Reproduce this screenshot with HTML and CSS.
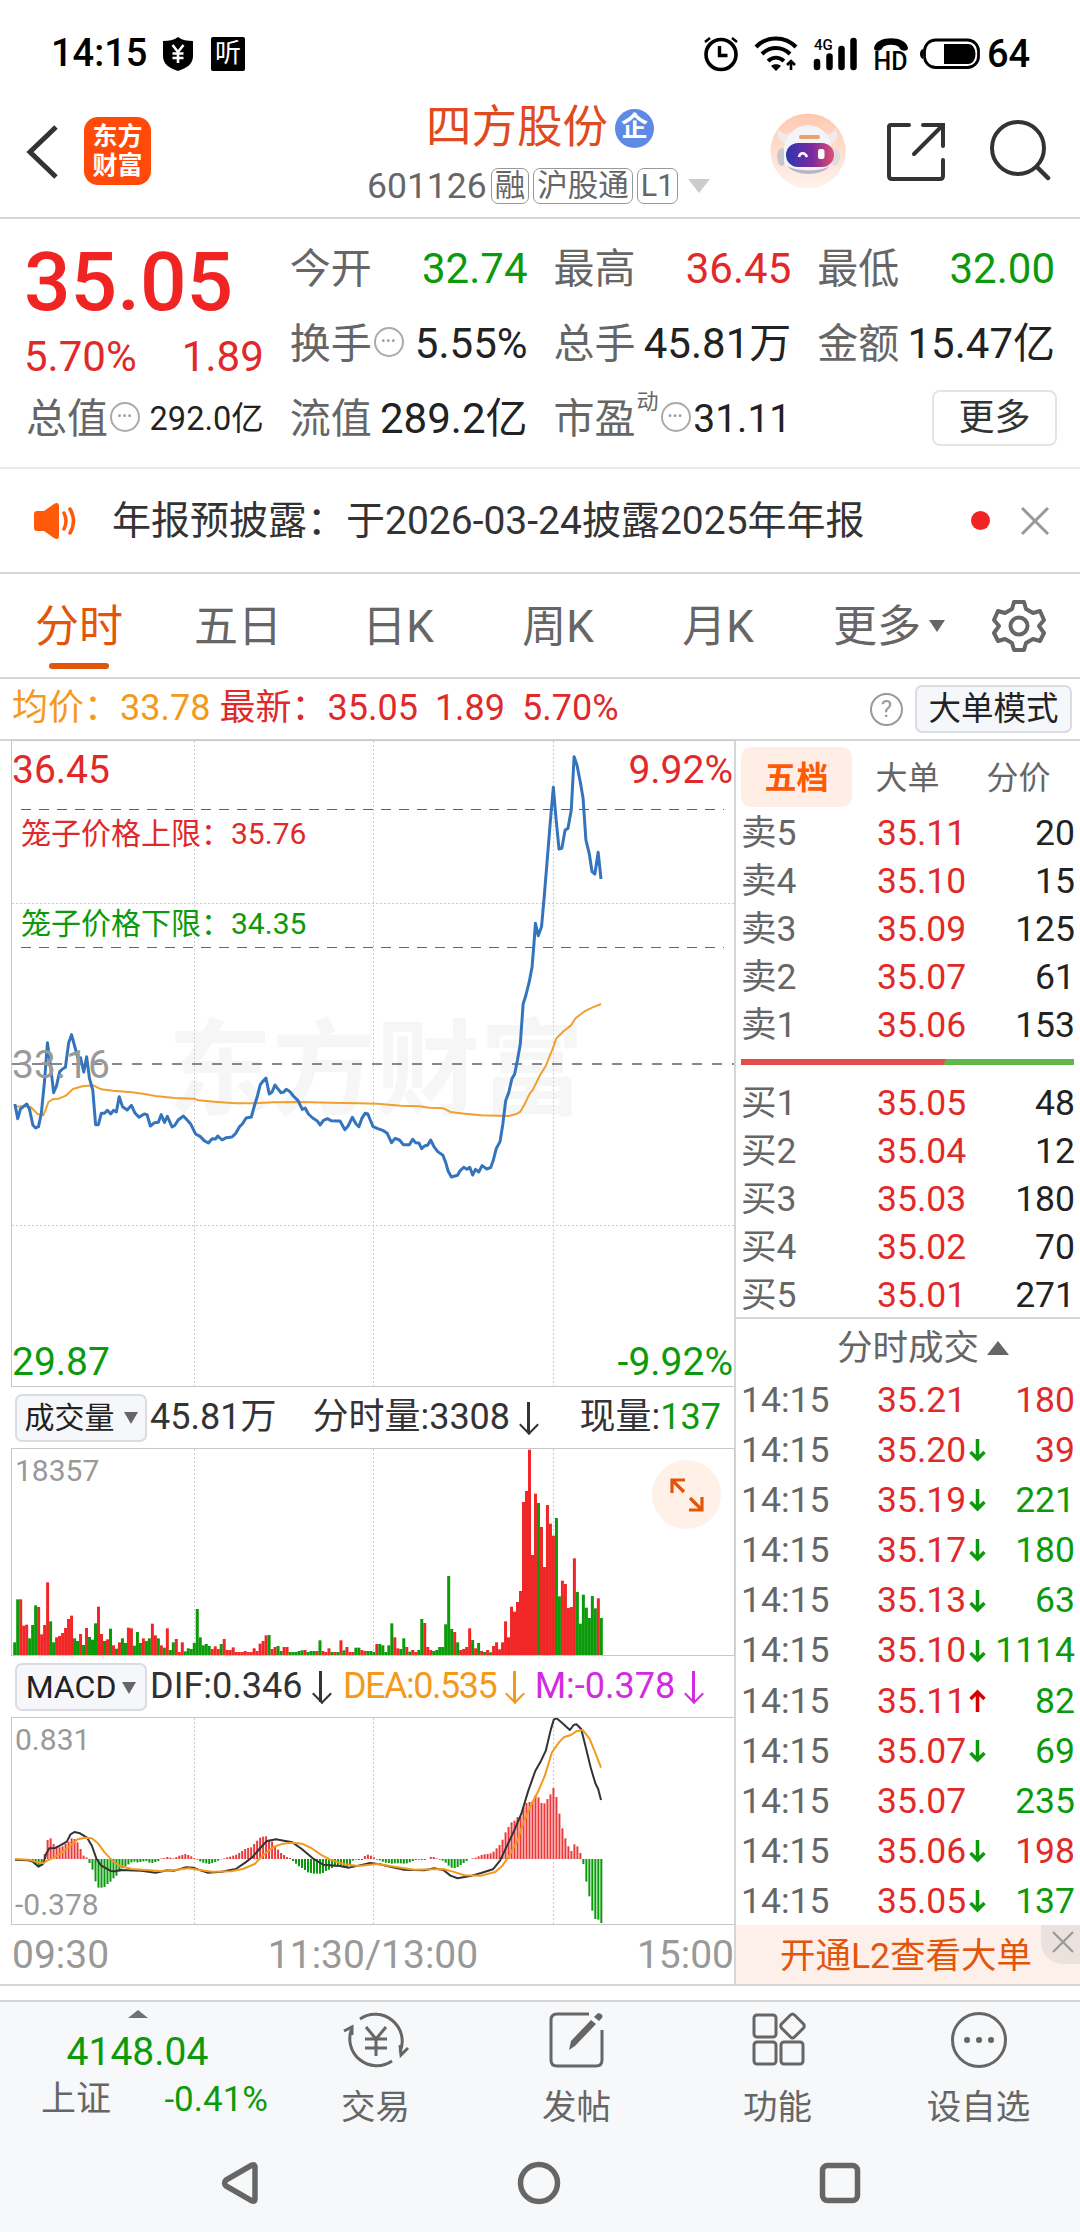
FILE: index.html
```html
<!DOCTYPE html>
<html lang="zh-CN">
<head>
  <meta charset="UTF-8" />
  <meta name="viewport" content="width=device-width, initial-scale=1.0" />
  <title>四方股份 601126</title>
  <link rel="stylesheet" href="styles.css">
</head>
<body>
  <!-- Status bar -->
  <div class="status">
    <span class="clock">14:15</span>
    <svg class="shield" width="30" height="34" viewBox="0 0 30 34"><path d="M15 0C19 3 24 4 30 4V19C30 27 24 31 15 34C6 31 0 27 0 19V4C6 4 11 3 15 0Z"/><path d="M9.500 8L15 15L20.500 8M15 15V26M9.500 16.500H20.500M9.500 21H20.500" fill="none" stroke="#fff" stroke-width="2.600"/></svg>
    <span class="listen">听</span>
    <span class="grow"></span>
    <svg class="phone-icons" width="340" height="60" viewBox="703 24 340 60">
      <g fill="none" stroke="#000">
        <circle cx="721" cy="54.500" r="15" stroke-width="3.600"/>
        <path d="M719.500 46V55.500H727.500" stroke-width="3.400"/>
        <path d="M705 42L710 38M737 42L732 38" stroke-width="2.600"/>
        <path d="M756 47C767 35.500 785 35.500 796 47M762 54C770 46 782 46 790 54M768 61C773 56.500 779 56.500 784 61" stroke-width="4"/>
        <path d="M791 70V62M787 65L791 61L795 65" stroke-width="2.600"/>
        <path d="M817 62V67M829.500 56.500V67M841.500 49V67M853.500 41V67" stroke-width="6.500" stroke-linecap="round"/>
        <rect x="924.500" y="40" width="54" height="27.500" rx="11" stroke-width="2.800"/>
      </g>
      <path d="M776 71L771 66C773 63.500 779 63.500 781 66Z"/>
      <path d="M874 48C876 35 906 35 908 48C908 52 900 51.500 899 47C895 44 887 44 883 47C882 51.500 874 52 874 48Z"/>
      <path d="M944 44H968C978 44 978 64 968 64H944ZM923 49C919 50 919 58 923 59Z"/>
      <text x="814" y="50" font-size="15" font-weight="500">4G</text>
      <text x="873.500" y="70" font-size="25" font-weight="500">HD</text>
      <text x="987" y="67" font-size="38" font-weight="500">64</text>
    </svg>
  </div>

  <!-- Header -->
  <header class="header">
    <svg class="back" width="34" height="56" viewBox="0 0 34 56"><path d="M30 3L4 28L30 53" fill="none" stroke="#333" stroke-width="5"/></svg>
    <div class="logo">东方<br>财富</div>
    <div class="stock">
      <div class="name">四方股份<span class="corp">企</span></div>
      <div class="code">601126<span class="tag">融</span><span class="tag">沪股通</span><span class="tag">L1</span><i class="tri"></i></div>
    </div>
    <svg class="robot" width="76" height="76" viewBox="0 0 76 76">
      <defs>
        <linearGradient id="halo" x2="0" y2="1"><stop stop-color="#ffc9b0"/><stop offset="1" stop-color="#fff3ec"/></linearGradient>
        <linearGradient id="visor"><stop stop-color="#2d36b0"/><stop offset=".55" stop-color="#7c2aa0"/><stop offset="1" stop-color="#e0506a"/></linearGradient>
      </defs>
      <circle cx="38" cy="38" r="37.500" fill="url(#halo)"/>
      <path d="M8 15C6 23 9 29 17 31L24 20C15 22 10 20 8 15ZM65 15C69 24 67 29 59 31L53 20C61 22 64 20 65 15Z" fill="#f1eaea"/>
      <ellipse cx="12" cy="44" rx="5" ry="9" fill="#c9c6d0"/><ellipse cx="65" cy="44" rx="5" ry="9" fill="#dedbe2"/>
      <path d="M14 38C14 4 62 4 62 38V46C64 67 12 67 14 46Z" fill="#f4f3f6"/>
      <path d="M16 52C25 64 52 64 61 52C54 59 24 59 16 52Z" fill="#bbb7c2"/>
      <rect x="29" y="22" width="21" height="4" rx="2" fill="#e5a26d"/>
      <rect x="16" y="30" width="48" height="24" rx="12" fill="url(#visor)"/>
      <path d="M29 44C30 39 35 39 37 44" fill="none" stroke="#fff" stroke-width="2.500"/>
      <rect x="48" y="36" width="6.500" height="10" rx="2.500" fill="#fff"/>
    </svg>
    <svg class="share" width="60" height="60" viewBox="0 0 60 60"><path d="M23 3H5Q3 3 3 5V54Q3 57 6 57H54Q57 57 57 54V38M37 3H57V24M56 4L28 32" fill="none" stroke="#333" stroke-width="4" stroke-linecap="round"/></svg>
    <svg class="search" width="62" height="62" viewBox="0 0 62 62"><circle cx="29" cy="29" r="26" fill="none" stroke="#333" stroke-width="4"/><path d="M48 48L59 59" stroke="#333" stroke-width="4.500" stroke-linecap="round"/></svg>
  </header>

  <!-- Quote -->
  <section class="quote">
    <div class="col">
      <div class="price">35.05</div>
      <div class="change"><span>5.70%</span><span>1.89</span></div>
      <div class="item small"><label>总值</label><i class="dots">•••</i><b>292.0亿</b></div>
    </div>
    <div class="col">
      <div class="item"><label>今开</label><b class="down">32.74</b></div>
      <div class="item"><label>换手</label><i class="dots">•••</i><b>5.55%</b></div>
      <div class="item"><label>流值</label><b>289.2亿</b></div>
    </div>
    <div class="col">
      <div class="item"><label>最高</label><b class="up">36.45</b></div>
      <div class="item"><label>总手</label><b>45.81万</b></div>
      <div class="item pe"><label>市盈</label><sup>动</sup><i class="dots">•••</i><b>31.11</b></div>
    </div>
    <div class="col">
      <div class="item"><label>最低</label><b class="down">32.00</b></div>
      <div class="item"><label>金额</label><b>15.47亿</b></div>
      <div class="item"><button class="more">更多</button></div>
    </div>
  </section>

  <!-- Notice -->
  <div class="notice">
    <svg width="46" height="38" viewBox="0 0 46 38"><path d="M3 9H10L20 2Q25 -1 25 5V33Q25 39 20 36L10 29H3Q0 29 0 26V12Q0 9 3 9Z" fill="#ff5a0a"/><path d="M30 11Q34 19 30 27M36 7Q43 19 36 31" fill="none" stroke="#ff5a0a" stroke-width="3.500" stroke-linecap="round"/></svg>
    <p>年报预披露：于2026-03-24披露2025年年报</p>
    <i class="red-dot"></i>
    <svg width="30" height="30" viewBox="0 0 30 30"><path d="M2 2L28 28M28 2L2 28" stroke="#999" stroke-width="3"/></svg>
  </div>

  <!-- Period tabs -->
  <nav class="tabs">
    <span class="active">分时</span><span>五日</span><span>日K</span><span>周K</span><span>月K</span>
    <span class="tab-more">更多<i class="tri"></i></span>
    <svg width="54" height="54" viewBox="0 0 54 54" fill="none" stroke="#666" stroke-width="4"><path d="M22 3H32L34 10L41 14L48 12L52 21L47 27L52 34L48 42L41 40L34 44L32 51H22L20 44L13 40L6 42L2 34L7 27L2 21L6 12L13 14L20 10Z" stroke-linejoin="round"/><circle cx="27" cy="27" r="8.500"/></svg>
  </nav>

  <div class="info">
    <span class="avg">均价：33.78</span>
    <span class="last">最新：35.05</span><span class="last">1.89</span><span class="last">5.70%</span>
    <i class="help">?</i>
    <button>大单模式</button>
  </div>

  <main class="main">
    <div class="charts">
      <svg class="chart" width="722" height="645" viewBox="0 0 722 645">
        <text class="watermark" x="156" y="366">东方财富</text>
        <path class="grid" d="M182.500 0V645M361.500 0V645M541.500 0V645M0 162.500H722M0 484.500H722"/>
        <path class="limit" d="M9 68.500H712" stroke="#b04046"/>
        <path class="limit" d="M9 206.500H712" stroke="#2e8b2e"/>
        <path class="base" d="M0 323H722"/>
        <g transform="translate(-12.200 239) scale(.4719 .3333)" fill="none">
          <polyline class="avg-line" points="32,380 55,378 66,382 80,402 92,406 97,390 103,366 112,358 125,356 140,347 155,327 175,319 198,316 215,328 240,332 280,337 310,343 330,348 370,354 412,356 420,361 460,366 500,370 540,370 580,367 640,366 700,368 760,370 800,371 850,377 890,379 910,383 940,385 955,396 985,401 1020,406 1078,408 1095,402 1103,395 1112,373 1122,343 1130,328 1145,285 1157,258 1172,205 1179,176 1195,153 1210,137 1220,115 1238,95 1255,83 1274,72"/>
          <polyline class="price-line" points="32,372 38,416 44,386 50,380 57,372 63,388 70,435 76,444 82,440 88,400 95,300 101,188 108,262 114,338 120,318 127,275 133,267 139,262 146,188 152,164 158,195 165,232 171,233 178,276 184,230 190,295 197,330 203,434 209,434 215,400 222,400 228,391 235,402 241,391 247,396 253,350 260,380 270,390 279,376 286,398 295,412 306,402 312,404 319,438 328,428 336,427 342,404 349,427 355,409 365,441 371,436 378,420 389,408 397,420 404,431 415,462 425,470 433,482 442,489 450,476 457,477 462,468 471,480 480,473 492,471 500,460 508,440 514,432 522,414 533,411 540,375 546,348 552,314 558,303 564,294 571,342 577,336 583,315 590,328 596,338 602,336 607,328 615,335 622,348 632,362 641,388 647,384 654,402 663,414 672,422 679,435 686,421 694,416 702,422 712,423 721,423 731,449 738,438 747,412 755,432 761,440 767,416 774,400 780,402 785,420 791,440 801,446 813,452 821,460 830,488 838,475 847,480 855,494 868,494 875,478 881,488 888,489 894,506 900,498 907,495 913,480 920,500 928,515 939,526 945,548 950,573 957,591 970,586 975,573 983,562 990,568 996,562 1002,585 1008,568 1015,576 1022,557 1032,567 1040,563 1046,540 1052,506 1060,485 1066,432 1072,362 1079,335 1085,297 1091,282 1097,240 1103,192 1109,72 1115,45 1122,5 1128,-40 1132,-110 1135,-170 1141,-133 1148,-160 1154,-255 1160,-360 1166,-465 1173,-578 1179,-480 1185,-393 1191,-395 1198,-450 1204,-455 1211,-510 1217,-670 1223,-645 1230,-595 1236,-545 1242,-420 1249,-380 1255,-325 1261,-318 1268,-383 1274,-303"/>
        </g>
        <g font-size="39">
          <text class="up" x="0" y="42">36.45</text>
          <text class="up" x="721" y="42" text-anchor="end">9.92%</text>
          <text class="muted" x="0" y="337">33.16</text>
          <text class="down" x="0" y="634">29.87</text>
          <text class="down" x="721" y="634" text-anchor="end">-9.92%</text>
        </g>
        <g font-size="30">
          <text class="up" x="9" y="103">笼子价格上限：35.76</text>
          <text class="down" x="9" y="193">笼子价格下限：34.35</text>
        </g>
      </svg>

      <div class="legend">
        <button>成交量<i class="tri"></i></button>
        <span class="vol-total">45.81万</span><span>分时量:3308</span><i class="arrow"></i>
        <span class="vol-now">现量:<em class="down">137</em></span>
      </div>
      <div class="volume">
        <svg class="chart" id="volume" width="722" height="206" viewBox="0 0 722 206">
          <path class="grid" d="M182.500 0V206M361.500 0V206M541.500 0V206"/>
          <text class="muted" x="3" y="32" font-size="30">18357</text>
        </svg>
        <div class="expand"><svg width="34" height="34" viewBox="0 0 34 34"><path d="M2 15V2H15M2 2L14 14M32 19V32H19M32 32L20 20" fill="none" stroke="#e2560c" stroke-width="3.200"/></svg></div>
      </div>

      <div class="legend">
        <button class="macd-btn">MACD<i class="tri"></i></button>
        <span>DIF:0.346</span><i class="arrow"></i>
        <span class="dea">DEA:0.535</span><i class="arrow dea"></i>
        <span class="m">M:-0.378</span><i class="arrow m"></i>
      </div>
      <svg class="chart" id="macd" width="722" height="206" viewBox="0 0 722 206">
        <path class="grid" d="M182.500 0V206M361.500 0V206M541.500 0V206"/>
        <g class="bars"></g>
        <g transform="translate(-12.200 -69) scale(.4719 .3333)" fill="none">
          <polyline class="dif-line" points="32,632 60,634 70,638 82,653 92,645 98,615 105,598 118,597 130,588 142,578 150,556 158,549 170,553 185,566 195,590 205,630 215,650 235,666 245,667 255,663 300,665 330,671 355,664 370,665 395,655 410,656 425,664 440,671 470,668 500,660 520,641 535,625 550,600 565,577 585,571 605,576 620,580 640,600 665,630 685,647 720,651 740,656 760,650 785,642 805,646 830,654 855,662 900,664 920,658 940,663 955,680 970,688 1000,680 1020,672 1045,661 1060,635 1075,590 1090,545 1105,495 1120,425 1135,365 1147,335 1157,305 1167,245 1174,212 1180,208 1190,220 1208,243 1216,228 1222,226 1232,240 1240,285 1252,355 1262,403 1268,420 1274,453"/>
          <polyline class="dea-line" points="32,630 60,632 75,638 92,643 100,635 115,626 135,607 150,590 165,571 182,566 195,568 208,583 222,610 240,637 255,651 280,660 340,666 370,663 400,658 420,662 450,668 490,667 515,660 540,645 560,616 580,594 600,584 620,581 640,584 660,597 680,617 700,632 730,646 760,651 800,645 850,656 880,662 940,660 960,668 985,679 1020,680 1050,669 1065,650 1080,620 1095,580 1110,520 1125,470 1140,430 1155,380 1170,310 1185,280 1195,265 1210,258 1222,247 1235,243 1250,270 1262,312 1274,356"/>
        </g>
        <g class="muted" font-size="30">
          <text x="3" y="32">0.831</text>
          <text x="3" y="197">-0.378</text>
        </g>
      </svg>
      <div class="axis"><span>09:30</span><span>11:30/13:00</span><span>15:00</span></div>
    </div>

    <!-- Order book -->
    <aside class="book">
      <div class="book-tabs"><span class="active">五档</span><span>大单</span><span>分价</span></div>
      <div class="depth">
        <div><label>卖5</label><b>35.11</b><em>20</em></div>
        <div><label>卖4</label><b>35.10</b><em>15</em></div>
        <div><label>卖3</label><b>35.09</b><em>125</em></div>
        <div><label>卖2</label><b>35.07</b><em>61</em></div>
        <div><label>卖1</label><b>35.06</b><em>153</em></div>
      </div>
      <div class="ratio"></div>
      <div class="depth">
        <div><label>买1</label><b>35.05</b><em>48</em></div>
        <div><label>买2</label><b>35.04</b><em>12</em></div>
        <div><label>买3</label><b>35.03</b><em>180</em></div>
        <div><label>买4</label><b>35.02</b><em>70</em></div>
        <div><label>买5</label><b>35.01</b><em>271</em></div>
      </div>
      <div class="deals-title">分时成交<i></i></div>
      <div class="deals" id="deals"></div>
      <div class="ad">开通L2查看大单<span class="close"><svg width="22" height="22" viewBox="0 0 22 22"><path d="M1 1L21 21M21 1L1 21" stroke="#999" stroke-width="2.200"/></svg></span></div>
    </aside>
  </main>

  <!-- Bottom bar -->
  <footer class="bottom">
    <div class="index">
      <i class="tri"></i>
      <div class="points">4148.04</div>
      <div class="pct"><label>上证</label><span>-0.41%</span></div>
    </div>
    <div class="nav-item">
      <svg width="66" height="60" viewBox="0 0 66 60" fill="none" stroke="#666" stroke-width="3"><path d="M17 9A27 27 0 0 1 57 42M49 51A27 27 0 0 1 9 18"/><path d="M1 21L9 17V25M65 38L58 45L57 35" /><path d="M23 17L33 29L43 17M33 29V46M22 29H44M22 38H44"/></svg>
      <span>交易</span>
    </div>
    <div class="nav-item">
      <svg width="66" height="60" viewBox="0 0 66 60" fill="none" stroke="#666" stroke-width="3"><path d="M45 4H13Q7 4 7 10V50Q7 56 13 56H52Q58 56 58 50V20"/><path d="M25 40L27 31L47 10L52 14L31 36ZM50 7L54 3Q60 4 58 8L55 11Z" fill="#666" stroke="none"/></svg>
      <span>发帖</span>
    </div>
    <div class="nav-item">
      <svg width="66" height="60" viewBox="0 0 66 60" fill="none" stroke="#666" stroke-width="3"><rect x="9" y="5" width="22" height="22" rx="3"/><rect x="9" y="32" width="22" height="22" rx="3"/><rect x="36" y="32" width="22" height="22" rx="3"/><path d="M45.500 5L36.500 14Q35 16 36.500 18L45.500 27Q47.500 29 49.500 27L58.500 18Q60 16 58.500 14L49.500 5Q47.500 3 45.500 5Z"/></svg>
      <span>功能</span>
    </div>
    <div class="nav-item">
      <svg width="66" height="60" viewBox="0 0 66 60" fill="none" stroke="#666" stroke-width="3"><circle cx="33" cy="30" r="26.500"/><path d="M21 30H21.100M33 30H33.100M45 30H45.100" stroke-width="6" stroke-linecap="round"/></svg>
      <span>设自选</span>
    </div>
  </footer>
  <div class="system">
    <svg width="42" height="46" viewBox="0 0 42 46"><path d="M33 5L7 20Q4 23 7 26L33 41Q36 42 36 39V7Q36 4 33 5Z"/></svg>
    <svg width="46" height="46" viewBox="0 0 46 46"><circle cx="23" cy="23" r="18.500"/></svg>
    <svg width="46" height="46" viewBox="0 0 46 46"><rect x="5.500" y="5.500" width="35" height="35" rx="5"/></svg>
  </div>
  <script src="charts.js"></script>
</body>
</html>
```
FILE: styles.css
```css
* {
  box-sizing: border-box;
}
body {
  margin: 0;
  width: 1080px;
  background-color: #fff;
  color: #333;
  font-family: Roboto, "Noto Sans CJK SC", sans-serif;
  line-height: 1.2;
}
svg {
  display: block;
  flex: none;
}
i, em, b {
  font-style: normal;
  font-weight: 400;
}
button {
  font-family: inherit;
  color: inherit;
  padding: 0;
}
.up { color: #e02a2a; fill: #e02a2a; }
.down { color: #0c9a0c; fill: #0c9a0c; }
.muted { fill: #999; }
.grow { flex: 1; }
.tri {
  display: inline-block;
  border: 8px solid transparent;
  border-top: 12px solid #666;
  border-bottom: 0;
}

/* status bar */
.status {
  height: 106px;
  padding: 2px 37px 0 51px;
  display: flex;
  align-items: center;
  color: #000;
}
.clock {
  width: 112px;
  font-size: 38px;
  font-weight: 500;
}
.listen {
  width: 34px;
  height: 34px;
  margin-left: 18px;
  background: #000;
  color: #fff;
  border-radius: 2px;
  font-size: 26px;
  line-height: 32px;
  text-align: center;
}

/* header */
.header {
  height: 113px;
  display: flex;
  align-items: flex-start;
  border-bottom: 2px solid #d5d5d5;
}
.back {
  margin: 18px 0 0 26px;
}
.logo {
  width: 67px;
  height: 68px;
  margin: 11px 0 0 24px;
  padding-top: 5px;
  border-radius: 14px;
  background: #ff4a0a;
  color: #fff;
  font-size: 25px;
  font-weight: 700;
  line-height: 29px;
  text-align: center;
}
.stock {
  width: 360px;
  margin: 1px 0 0 208px;
}
.name {
  display: flex;
  align-items: center;
  height: 42px;
  padding-left: 67px;
  color: #e04a20;
  font-size: 45.500px;
  line-height: 44px;
}
.corp {
  width: 39px;
  height: 39px;
  margin-left: 7px;
  border-radius: 50%;
  background: #5e8ae6;
  color: #fff;
  font-size: 27px;
  font-weight: 700;
  line-height: 37px;
  text-align: center;
}
.code {
  display: flex;
  align-items: center;
  height: 36px;
  margin-top: 19px;
  padding-left: 8px;
  color: #666;
  font-size: 35.500px;
}
.tag {
  height: 36px;
  margin-left: 4px;
  padding: 0 3px;
  border: 1.500px solid #999;
  border-radius: 7px;
  font-size: 30.500px;
  line-height: 33px;
}
.code .tri {
  margin-left: 10px;
  border-width: 14px 11px 0;
  border-top-color: #ccc;
}
.robot {
  margin: 7px 0 0 51px;
}
.share {
  margin: 16px 0 0 40px;
}
.search {
  margin: 13px 0 0 43px;
}

/* quote */
.quote {
  display: grid;
  grid-template-columns: repeat(4, 1fr);
  gap: 26px;
  height: 250px;
  padding: 13px 25px 0 26px;
  border-bottom: 2px solid #ececec;
}
.item {
  display: flex;
  align-items: center;
  height: 75px;
  font-size: 41px;
  white-space: nowrap;
}
.item label {
  color: #666;
}
.item b {
  margin-left: auto;
  font-size: 42px;
}
.item b:not(.up):not(.down) {
  color: #222;
}
.price {
  height: 94px;
  margin-left: -2px;
  color: #f12424;
  font-size: 82px;
  font-weight: 500;
  line-height: 101px;
}
.change {
  display: flex;
  justify-content: space-between;
  height: 56px;
  margin-left: -2px;
  color: #e02a2a;
  font-size: 42px;
  line-height: 62px;
}
.small b {
  font-size: 32.500px;
}
.dots {
  width: 30px;
  height: 30px;
  margin: -6px 0 0 2px;
  border: 2.500px solid #aaa;
  border-radius: 50%;
  color: #999;
  font-size: 12px;
  line-height: 25px;
  letter-spacing: 1px;
  text-align: center;
}
.item sup {
  margin: -36px 0 0 1px;
  color: #666;
  font-size: 22px;
  line-height: 24px;
  vertical-align: baseline;
}
.pe b {
  font-size: 39px;
}
.more {
  width: 125px;
  height: 56px;
  margin: -4px -2px 0 auto;
  border: 2px solid #e4e4e4;
  border-radius: 8px;
  background: #fff;
  font-size: 36px;
  line-height: 50px;
}

/* notice */
.notice {
  display: flex;
  align-items: center;
  height: 105px;
  padding: 0 30px 0 34px;
  border-bottom: 2px solid #d5d5d5;
}
.notice p {
  flex: 1;
  margin: 0 0 0 32px;
  font-size: 39px;
  line-height: 50px;
}
.red-dot {
  width: 19px;
  height: 19px;
  margin-right: 30px;
  border-radius: 50%;
  background: #f12424;
}

/* tabs */
.tabs {
  display: flex;
  align-items: center;
  height: 105px;
  border-bottom: 2px solid #d5d5d5;
  color: #666;
  font-size: 44px;
  line-height: 60px;
}
.tabs span {
  position: relative;
  width: 160px;
  padding-top: 3px;
  text-align: center;
}
.tabs .active {
  width: 158px;
  color: #e2560c;
}
.tabs .active::after {
  content: "";
  position: absolute;
  left: 49px;
  bottom: -12px;
  width: 60px;
  height: 6px;
  border-radius: 3px;
  background: #e2560c;
}
.tabs .tab-more {
  width: 189px;
  margin-right: 5px;
  text-align: right;
  white-space: nowrap;
}
.tab-more .tri {
  margin: 0 42px 10px 8px;
}

/* info line */
.info {
  display: flex;
  align-items: center;
  height: 62px;
  padding: 0 8px 0 12px;
  border-bottom: 2px solid #d5d5d5;
  font-size: 36px;
}
.avg { color: #f39a1d; margin-right: 9px; }
.last { color: #e02a2a; margin-right: 17px; }
.help {
  width: 33px;
  height: 33px;
  margin: 0 12px 0 auto;
  border: 2.500px solid #999;
  border-radius: 50%;
  color: #999;
  font-size: 24px;
  line-height: 29px;
  text-align: center;
}
.info button, .legend button {
  height: 48px;
  border: 2px solid #dadce2;
  border-radius: 7px;
  background: #f6f7fa;
  color: #222;
}
.info button {
  width: 157px;
  font-size: 32.500px;
  line-height: 42px;
}

/* charts */
.main {
  display: flex;
  height: 1245px;
  border-bottom: 2px solid #d5d5d5;
}
.charts {
  width: 734px;
  padding-left: 12px;
}
.chart {
  outline: 1.500px solid #c8c8c8;
}
.grid {
  fill: none;
  stroke: #ccc;
  stroke-width: 1;
  stroke-dasharray: 2 2;
}
.limit {
  stroke-width: 1;
  stroke-dasharray: 10 8;
}
.base {
  stroke: #888;
  stroke-width: 2;
  stroke-dasharray: 10 10;
}
.watermark {
  fill: #f6f6f6;
  font-size: 104px;
  font-weight: 700;
}
polyline {
  vector-effect: non-scaling-stroke;
  stroke-linejoin: round;
}
.price-line { stroke: #3474bd; stroke-width: 3; }
.avg-line { stroke: #f0a030; stroke-width: 2; }
.dif-line { stroke: #333; stroke-width: 2; }
.dea-line { stroke: #f39a1d; stroke-width: 2; }
.legend {
  display: flex;
  align-items: center;
  height: 63px;
  font-size: 36px;
  white-space: nowrap;
}
.legend button {
  width: 132px;
  margin: 0 3px 0 3px;
  font-size: 30px;
  line-height: 42px;
}
.legend .macd-btn {
  font-size: 32px;
}
.legend button .tri {
  margin: 0 0 4px 9px;
  border-width: 12px 7px 0;
}
.legend .macd-btn .tri {
  margin-left: 6px;
}
.vol-total { margin-right: 36px; }
.vol-now { margin-left: 50px; }
.arrow {
  position: relative;
  width: 2.500px;
  height: 31px;
  margin: 0 0 0 17px;
  background: currentColor;
}
.arrow::after {
  content: "";
  position: absolute;
  left: -4.800px;
  bottom: 1px;
  width: 12px;
  height: 12px;
  border: solid currentColor;
  border-width: 0 2.500px 2.500px 0;
  transform: rotate(45deg);
}
.dea { color: #f39a1d; }
span.dea {
  margin-left: 21px;
  letter-spacing: -1.500px;
}
.m { color: #d22be0; }
span.m { margin-left: 19px; }
.volume {
  position: relative;
}
.expand {
  position: absolute;
  right: 13px;
  top: 11px;
  width: 69px;
  height: 69px;
  display: flex;
  align-items: center;
  justify-content: center;
  border-radius: 50%;
  background: #fff0e8;
}
.axis {
  display: flex;
  justify-content: space-between;
  height: 60px;
  color: #999;
  font-size: 39px;
  line-height: 63px;
}

/* order book */
.book {
  width: 346px;
  border-left: 2px solid #d5d5d5;
  font-size: 35.500px;
}
.book-tabs {
  display: flex;
  height: 66px;
  padding: 6px 0 0 5px;
  color: #666;
  font-size: 32px;
  line-height: 63px;
  text-align: center;
}
.book-tabs span { width: 111px; }
.book-tabs .active {
  height: 60px;
  border-radius: 10px;
  background: #feeee6;
  color: #fd5a06;
  font-weight: 700;
}
.depth div, .deals div {
  display: grid;
  grid-template-columns: 136px 92px 22px 1fr;
  align-items: center;
  height: 48px;
  padding: 0 5px;
}
.depth em, .deals em {
  grid-column: 4;
  justify-self: end;
}
.depth label, .deals label { color: #666; }
.depth b, .deals b { color: #e02a2a; }
.depth em { color: #222; }
.depth { height: 252px; padding-top: 2px; }
.ratio {
  height: 6px;
  margin: 0 6px 0 5px;
  background: linear-gradient(115deg, #e04e4e 61%, #62b74c 61.200%);
}
.ratio + .depth { padding-top: 14px; }
.deals-title {
  height: 58px;
  border-top: 2px solid #d5d5d5;
  color: #666;
  line-height: 59px;
  padding-left: 101px;
}
.deals-title i {
  display: inline-block;
  margin: 0 0 5px 8px;
  border: solid transparent;
  border-width: 0 11px 14px;
  border-bottom-color: #666;
}
.deals {
  height: 550px;
}
.deals div { height: 50.150px; }
.ad {
  position: relative;
  height: 59px;
  background: #fdf0ea;
  color: #e2560c;
  line-height: 62px;
  padding-left: 44px;
}
.close {
  position: absolute;
  right: 0;
  top: 0;
  width: 39px;
  height: 39px;
  padding: 6px 0 0 11px;
  border-bottom-left-radius: 22px;
  background: #ebe1dd;
}

/* bottom */
.bottom {
  display: flex;
  height: 136px;
  margin-top: 14px;
  border-top: 2px solid #d5d5d5;
  background: #f7f8fa;
  color: #666;
}
.index {
  width: 275px;
  text-align: center;
}
.index .tri {
  display: block;
  width: 0;
  margin: 8px auto 0;
  border: solid transparent;
  border-width: 0 10px 8px;
  border-bottom-color: #707078;
}
.points {
  margin-top: 13px;
  color: #0c9a0c;
  font-size: 39px;
  line-height: 42px;
}
.pct {
  display: flex;
  justify-content: space-between;
  margin-top: 5px;
  padding: 0 7px 0 41px;
  font-size: 35px;
  line-height: 44px;
}
.pct span { color: #0c9a0c; }
.nav-item {
  width: 201px;
  display: flex;
  flex-direction: column;
  align-items: center;
  padding-top: 8px;
  font-size: 34.500px;
  line-height: 44px;
}
.nav-item span { margin-top: 15px; }
.system {
  display: flex;
  height: 96px;
  padding: 24px 217px 0 219px;
  justify-content: space-between;
  background: #f7f8fa;
}
.system svg {
  fill: none;
  stroke: #666;
  stroke-width: 5.500;
}
```
FILE: charts.js
```js
const SVG = "http://www.w3.org/2000/svg";
const STEP = 2.993;

// one value per minute, negative = falling minute
const volume = [
  -38, -167, 167, 88, 91, -50, -90, -149, 144, 62, 90, 218, -101, -38, 53, 57, 66, 81, 108, 118,
  -50, -42, 63, -30, 81, -54, -46, -95, 145, 63, -42, 47, -79, 29, -19, 38, -50, -36, 82, 80,
  -28, -69, -36, 50, -42, -50, 94, 59, -50, 29, -22, 80, -15, -38, 48, 9, 38, -11, -20, -18,
  -36, -138, -53, -29, -33, -27, 18, 26, 18, -33, 48, 15, 15, 23, 9, 9, 9, 12, 9, 9,
  20, 12, 34, 42, 59, -60, 18, 24, -27, -12, 24, 24, -9, -9, -9, -12, -14, 15, -9, -12,
  -12, 12, -44, 12, 9, 20, -9, 9, -9, 44, -14, 24, 9, 9, -22, -22, 15, 12, -12, -12,
  -9, 33, -33, -29, -9, -29, -95, 53, 20, -18, -50, 24, -10, 15, 9, -15, -108, 96, 24, 15,
  -12, -15, -24, -24, -92, -237, -78, 69, -38, 15, 18, 24, 80, -45, 20, -36, 12, -9, 15, -8,
  27, 38, 17, 38, 101, 53, 145, 130, 159, 192, 459, 492, 616, 300, 484, -456, 384, 264, 450, 394,
  358, -411, -176, 223, 213, 141, 144, 290, -189, -94, -181, -142, -111, -177, -140, 170, -111
];

const macd = [
  0, -2, -2, -3, -4, -5, -10, -15, -22, -20, 15, 57, 62, 45, 38, 35, 38, 45, 52, 62,
  60, 50, 30, 10, 5, -12, -32, -67, -86, -86, -84, -75, -68, -58, -50, -38, -28, -22, -16, -10,
  -8, -10, -9, -7, -6, -11, -12, -9, -6, 2, 3, 6, 4, 2, 6, 10, 12, 15, 12, 8,
  3, -2, -7, -11, -13, -15, -12, -9, -5, -1, 2, 5, 7, 10, 13, 18, 24, 30, 33, 35,
  45, 55, 64, 67, 68, 58, 52, 38, 28, 18, 12, 6, 3, -6, -14, -22, -27, -33, -40, -42,
  -44, -44, -44, -42, -36, -32, -27, -22, -20, -20, -22, -24, -18, -5, -2, -3, -3, 9, 13, 10,
  5, -2, -4, -8, -11, -12, -14, -13, -13, -13, -14, -13, -10, -6, -3, -2, -3, -3, 0, 6,
  6, 2, -2, -5, -11, -20, -26, -27, -24, -18, -12, -6, 0, 2, 4, 8, 12, 14, 15, 17,
  22, 32, 42, 58, 80, 96, 110, 115, 126, 127, 155, 168, 171, 173, 191, 185, 168, 167, 180, 194,
  213, 186, 136, 92, 62, 38, 24, 44, 38, 18, -15, -68, -112, -155, -180, -182, -192
];

function bar(parent, i, y, h, w, color) {
  const r = document.createElementNS(SVG, "rect");
  r.setAttribute("x", (2.7 + i * STEP - w / 2).toFixed(2));
  r.setAttribute("y", y);
  r.setAttribute("width", w);
  r.setAttribute("height", h);
  r.setAttribute("fill", color);
  parent.appendChild(r);
}

const volumeEl = document.getElementById("volume");
volume.forEach((v, i) => {
  const h = Math.abs(v) / 3;
  bar(volumeEl, i, 206 - h, h, 3, v > 0 ? "#f12626" : "#0a9a0a");
});

const macdEl = document.querySelector("#macd .bars");
macd.forEach((v, i) => {
  const h = Math.abs(v) / 3;
  bar(macdEl, i, v > 0 ? 141 - h : 141, h, 2, v > 0 ? "#ec3a3a" : "#0a9a0a");
});

// price, direction, amount, colour of the amount
const deals = [
  ["35.21", "", 180, "up"],
  ["35.20", "down", 39, "up"],
  ["35.19", "down", 221, "down"],
  ["35.17", "down", 180, "down"],
  ["35.13", "down", 63, "down"],
  ["35.10", "down", 1114, "down"],
  ["35.11", "up", 82, "down"],
  ["35.07", "down", 69, "down"],
  ["35.07", "", 235, "down"],
  ["35.06", "down", 198, "up"],
  ["35.05", "down", 137, "down"]
];
const arrows = {
  "": "",
  down: '<svg width="17" height="24" viewBox="0 0 17 24"><path d="M8.500 1V21M1.500 14L8.500 21L15.500 14" fill="none" stroke="#0c9a0c" stroke-width="3.500"/></svg>',
  up: '<svg width="17" height="24" viewBox="0 0 17 24"><path d="M8.500 23V3M1.500 10L8.500 3L15.500 10" fill="none" stroke="#d80000" stroke-width="3.500"/></svg>'
};
document.getElementById("deals").innerHTML = deals.map(d =>
  `<div><label>14:15</label><b>${d[0]}</b>${arrows[d[1]]}<em class="${d[3]}">${d[2]}</em></div>`
).join("");
```
